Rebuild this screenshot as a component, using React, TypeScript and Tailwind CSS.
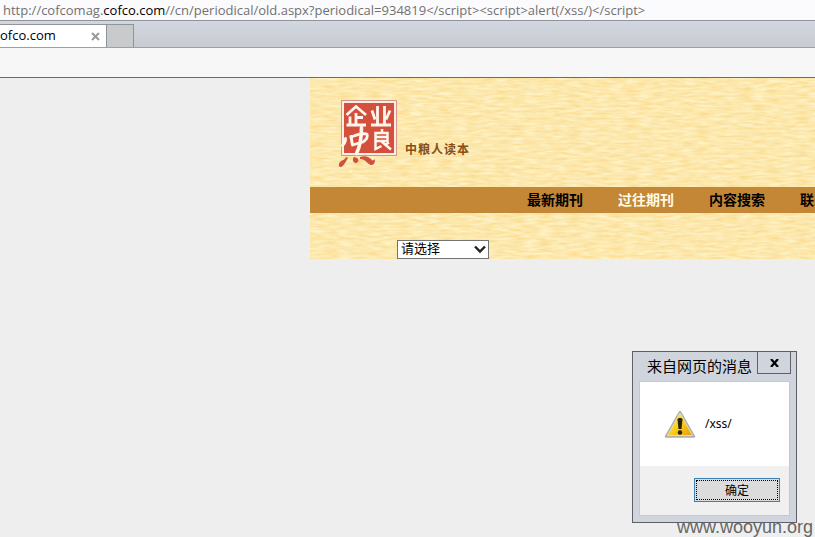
import React from "react";

const uiFont = "font-['Noto_Sans','Noto_Sans_CJK_SC',sans-serif]";
const pageFont = "font-['Liberation_Sans','Noto_Sans_CJK_SC',sans-serif]";

function AddressBar() {
  return (
    <div className="flex h-[21px] items-center overflow-hidden whitespace-nowrap border-b border-[#8f949b] bg-[#fbfbfe] pl-[3px] font-['Open_Sans',sans-serif] text-[13px] leading-[20px] text-[#717171]">
      <span>http://cofcomag.</span>
      <span className="text-black">cofco.com</span>
      <span>//cn/periodical/old.aspx?periodical=934819&lt;/script&gt;</span>
      <span>&lt;script&gt;alert(/xss/)&lt;/script&gt;</span>
    </div>
  );
}

function TabStrip() {
  return (
    <div className="flex h-[27px] items-end border-b border-[#9c9fa4] bg-linear-to-b from-[#d2d7e0] to-[#c8cbd0]">
      <div className="flex h-[23px] w-[107px] items-center justify-between border-t border-r border-[#8f949b] bg-white pr-[6px] font-['Open_Sans',sans-serif] text-[13px]">
        <span>ofco.com</span>
        <button type="button" aria-label="Close tab" className="flex">
          <svg width="9" height="9" viewBox="0 0 9 9" stroke="#9a9a9a" strokeWidth="2">
            <path d="M1 1l7 7M8 1L1 8" />
          </svg>
        </button>
      </div>
      <button
        type="button"
        aria-label="New tab"
        className="h-[23px] w-[27px] border-t border-r border-[#8f949b] bg-[#c9cacc]"
      />
    </div>
  );
}

function PaperTexture() {
  return (
    <svg className="absolute inset-0 h-full w-full" aria-hidden="true">
      <filter id="paper" x="0" y="0" width="100%" height="100%" colorInterpolationFilters="sRGB">
        <feTurbulence type="fractalNoise" baseFrequency="0.07 0.4" numOctaves="2" seed="8" />
        <feColorMatrix
          values="0.02 0 0 0 0.98
                  0.14 0 0 0 0.84
                  0.34 0 0 0 0.51
                  0 0 0 0 1"
        />
      </filter>
      <rect width="100%" height="100%" fill="#fce8a8" />
      <rect width="100%" height="100%" filter="url(#paper)" />
    </svg>
  );
}

function Logo() {
  return (
    <svg width="62" height="70" viewBox="0 0 62 70" role="img" aria-label="企业中粮" fill="none">
      <rect x="4.500" y="1.500" width="55" height="55" fill="#fdeee2" stroke="#d9958a" />
      <rect x="7" y="4" width="50" height="50" fill="#d5503c" />
      <g stroke="#fff6ee" strokeWidth="2.800">
        <path d="M9.500 16L19 7.500l10 8.500M19 14v11M13 17.500v8M19 18.500h7M9.500 26h19.500" />
        <path d="M40.500 7v18M47.500 7v18M35 11.500l3 9M53 11.500l-4 9M34 26h20" />
        <path d="M45 30v4M38.500 34h12v8h-12zM38.500 38h12M38.500 34v16l6-3M44 42l10 8.500M52 43.500l-4 2.500" strokeWidth="2.500" />
      </g>
      <g stroke="#fff6ee" strokeLinecap="round" strokeLinejoin="round">
        <path d="M8.500 39.500c0 3-1 5-3 7" strokeWidth="3" />
        <path d="M14 37.500l1.500 8.500" strokeWidth="3" />
        <path d="M14 38c5-2 11-4 16-3 1 3-1 6-4 8l-9 2.500" strokeWidth="2.800" />
        <path d="M24.500 28.500c0 9-1 18-5 26" strokeWidth="3.600" />
      </g>
      <g fill="#cf5140">
        <path d="M9 58c-1 3-4 3-6 5-2 3-1 5 1 5 3-1 5-6 7-9z" />
        <path d="M17 58c-2 2-1 5 1 6 3 0 4-2 3-4-1-1-2-2-4-2z" />
        <path d="M23 58c5-2 9 0 12 3 1 1 2 0 3-1 0 4-1 6-4 6-4-1-5-6-11-6z" />
      </g>
    </svg>
  );
}

const links = [
  { label: "最新期刊", active: false },
  { label: "过往期刊", active: true },
  { label: "内容搜索", active: false },
  { label: "联系我们", active: false },
];

function Banner() {
  return (
    <header className={`relative ml-[310px] overflow-hidden ${pageFont}`}>
      <PaperTexture />
      <div className="relative">
        <div className="flex h-[109px] items-start pt-[21px] pl-[27px]">
          <Logo />
          <span className="mt-[42px] ml-[6px] text-[12px] leading-[18px] font-bold tracking-[1px] text-[#855018]">
            中粮人读本
          </span>
        </div>
        <nav className="flex h-[26px] items-center gap-[35px] bg-[#c38735] pl-[217px] text-[14px] font-bold whitespace-nowrap">
          {links.map((link) => (
            <a key={link.label} href="#" className={link.active ? "shrink-0 text-[#fffbe6]" : "shrink-0 text-black"}>
              {link.label}
            </a>
          ))}
        </nav>
        <div className="flex h-[46px] items-end pl-[87px]">
          <div className="relative flex">
            <select
              aria-label="请选择"
              className="h-[19px] w-[92px] appearance-none border border-[#737373] bg-white pb-[2px] pl-[3px] text-[13px] leading-[15px] text-black"
            >
              <option>请选择</option>
            </select>
            <svg
              className="pointer-events-none absolute top-[5px] right-[3px]"
              width="12"
              height="9"
              viewBox="0 0 12 9"
              fill="none"
              stroke="#222"
              strokeWidth="2.400"
            >
              <path d="M1 1.500l5 5 5-5" />
            </svg>
          </div>
        </div>
      </div>
    </header>
  );
}

function WarningIcon() {
  return (
    <svg width="32" height="30" viewBox="0 0 32 30" aria-hidden="true">
      <defs>
        <linearGradient id="warn" x1="0" y1="0" x2="1" y2="1">
          <stop offset="0" stopColor="#fff06a" />
          <stop offset="0.500" stopColor="#fbd01c" />
          <stop offset="1" stopColor="#e99a08" />
        </linearGradient>
      </defs>
      <path d="M16 3L30 27.500H2z" fill="#b9b9b0" stroke="#b0b0aa" strokeWidth="2.500" strokeLinejoin="round" />
      <path d="M16 4L28.500 26.500h-25z" fill="url(#warn)" stroke="#e9dfa0" strokeLinejoin="round" />
      <path d="M13.500 10.500c0-2 5-2 5 0L17.500 20h-3z" fill="#28240f" />
      <circle cx="16" cy="23.500" r="2.200" fill="#28240f" />
    </svg>
  );
}

function AlertDialog() {
  return (
    <div
      role="alertdialog"
      aria-labelledby="alert-title"
      className="absolute top-[351px] left-[632px] w-[165px] border border-[#5d6066] bg-[#d0d5dd] px-[6px] pb-[6px]"
    >
      <div className="flex h-[29px] items-start justify-between pl-[8px]">
        <h1 id="alert-title" className="pt-[3px] text-[15px] leading-[22px] whitespace-nowrap">
          来自网页的消息
        </h1>
        <button
          type="button"
          aria-label="Close"
          className="-mr-px flex h-[22px] w-[34px] shrink-0 items-center justify-center border border-t-0 border-[#5d6066]"
        >
          <svg width="9" height="8" viewBox="0 0 9 8" stroke="#000" strokeWidth="2.200">
            <path d="M1 0l7 8M8 0L1 8" />
          </svg>
        </button>
      </div>
      <div className="border border-[#c3c9d1] bg-[#f0f0f0]">
        <div className="flex h-[84px] items-center gap-[9px] bg-white pl-[24px] text-[12px]">
          <WarningIcon />
          <span>/xss/</span>
        </div>
        <div className="flex h-[49px] items-start justify-end pt-[12px] pr-[9px]">
          <button type="button" className="h-[24px] w-[86px] border border-[#3c7fb1] bg-[#dcdcdc] p-px text-[12px]">
            <span className="flex h-full items-center justify-center border border-dotted border-black pt-[2px]">
              确定
            </span>
          </button>
        </div>
      </div>
    </div>
  );
}

export default function App() {
  return (
    <div className={`relative min-h-screen overflow-hidden bg-[#eeeeee] text-black ${uiFont}`}>
      <AddressBar />
      <TabStrip />
      <div className="h-[30px] border-b border-[#6b6b6b] bg-[#f7f7f7]" />
      <main>
        <Banner />
      </main>
      <AlertDialog />
      <div className="absolute right-[2px] bottom-0 font-['Liberation_Sans',sans-serif] text-[18px] leading-[20px] text-[#666666]">
        www.wooyun.org
      </div>
    </div>
  );
}
